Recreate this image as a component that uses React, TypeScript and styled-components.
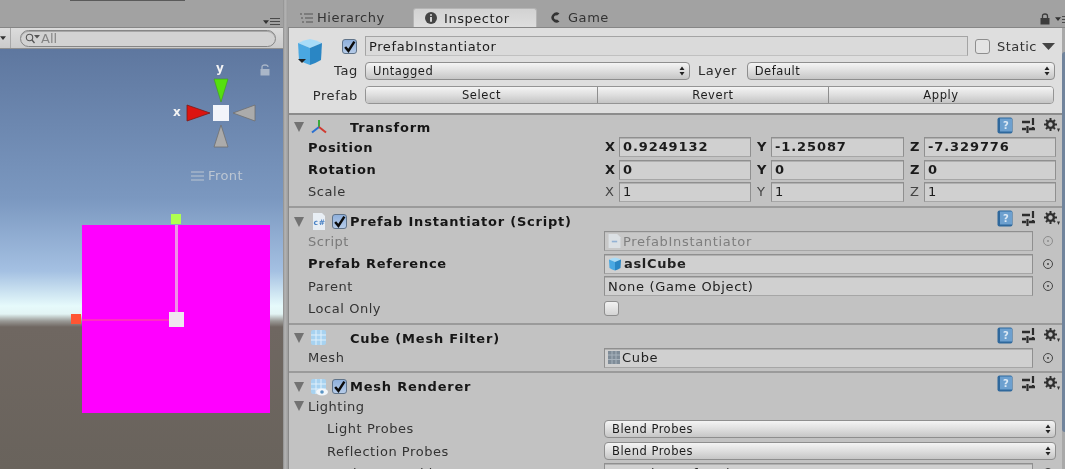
import styled, { createGlobalStyle } from "styled-components";

const Global = createGlobalStyle`
  html, body { margin: 0; padding: 0; background: #a2a2a2; }
  body { font-family: "DejaVu Sans", sans-serif; color: #1c1c1c; }
`;

const Window = styled.div`
  width: 1065px;
  height: 469px;
  display: flex;
  overflow: hidden;
  background: #a2a2a2;
  filter: blur(0.45px);
`;

/* ---------- left: scene ---------- */
const ScenePane = styled.div`
  width: 283px;
  display: flex;
  flex-direction: column;
  flex-shrink: 0;
`;

const SceneTop = styled.div`
  height: 27px;
  position: relative;
  background: #a2a2a2;
  border-bottom: 1px solid #868686;
`;

const TabEdge = styled.div`
  position: absolute;
  left: 70px;
  top: 0;
  width: 115px;
  height: 1px;
  background: #5a5a5a;
`;

const PaneMenu = styled.div<{ $right: number }>`
  position: absolute;
  right: ${(p) => p.$right}px;
  bottom: 2px;
  display: flex;
  align-items: center;
  gap: 1px;
`;

const SceneBar = styled.div`
  height: 20px;
  display: flex;
  align-items: center;
  background: linear-gradient(#dcdcdc, #cbcbcb);
  border-bottom: 1px solid #8f8f8f;
`;

const BarDrop = styled.div`
  width: 10px;
  height: 100%;
  display: flex;
  align-items: center;
  border-right: 1px solid #a8a8a8;
`;

const SearchBox = styled.div`
  margin-left: 9px;
  width: 256px;
  height: 17px;
  border: 1px solid #858585;
  border-radius: 9px;
  background: #d2d2d2;
  box-shadow: inset 0 1px 0 #a6a6a6;
  display: flex;
  align-items: center;
  gap: 1px;
  padding-left: 4px;
  box-sizing: border-box;
  font-size: 13px;
  color: #858585;
`;

const SceneView = styled.div`
  flex: 1;
  position: relative;
  overflow: hidden;
  background: linear-gradient(
    #5e779f 0,
    #7b98c0 150px,
    #a4c0e2 222px,
    #e6fafb 257px,
    #e2f4f4 265px,
    #9a9a96 272px,
    #6f6761 278px,
    #69635c 420px
  );
`;

const Gizmo = styled.svg`
  position: absolute;
  left: 165px;
  top: 10px;
`;

const GizmoLabel = styled.span<{ $x: number; $y: number }>`
  position: absolute;
  left: ${(p) => p.$x}px;
  top: ${(p) => p.$y}px;
  font-size: 12px;
  font-weight: 700;
  color: #f4f4f4;
`;

const SceneLock = styled.svg`
  position: absolute;
  left: 260px;
  top: 15px;
`;

const FrontLabel = styled.div`
  position: absolute;
  left: 191px;
  top: 119px;
  display: flex;
  align-items: center;
  gap: 4px;
  font-size: 13px;
  letter-spacing: 0.4px;
  color: #bcc6d2;
`;

const PinkQuad = styled.div`
  position: absolute;
  left: 82px;
  top: 176px;
  width: 188px;
  height: 188px;
  background: #ff00ff;
`;

const Handle = styled.div<{ $x: number; $y: number; $s: number; $c: string }>`
  position: absolute;
  left: ${(p) => p.$x}px;
  top: ${(p) => p.$y}px;
  width: ${(p) => p.$s}px;
  height: ${(p) => p.$s}px;
  background: ${(p) => p.$c};
`;

const AxisV = styled.div`
  position: absolute;
  left: 175px;
  top: 176px;
  width: 3px;
  height: 88px;
  background: #f08ee8;
`;

const AxisH = styled.div`
  position: absolute;
  left: 82px;
  top: 270px;
  width: 88px;
  height: 2px;
  background: #ff2cc4;
`;

const Splitter = styled.div`
  width: 5px;
  flex-shrink: 0;
  background: linear-gradient(90deg, #8e8e8e, #b4b4b4 40%, #9c9c9c);
`;

/* ---------- right: inspector ---------- */
const InspectorPane = styled.div`
  flex: 1;
  display: flex;
  flex-direction: column;
  min-width: 0;
`;

const TabStrip = styled.div`
  height: 28px;
  position: relative;
  display: flex;
  align-items: flex-end;
  padding-left: 9px;
  box-sizing: border-box;
  background: #a2a2a2;
  border-bottom: 1px solid #868686;
`;

const Tab = styled.div<{ $active?: boolean; $w: number; $pad: number; $gap: number }>`
  width: ${(p) => p.$w}px;
  height: 19px;
  box-sizing: border-box;
  display: flex;
  align-items: center;
  padding-left: ${(p) => p.$pad}px;
  gap: ${(p) => p.$gap}px;
  font-size: 13px;
  letter-spacing: 0.55px;
  color: ${(p) => (p.$active ? "#1e1e1e" : "#333")};
  background: ${(p) => (p.$active ? "linear-gradient(#d2d2d2, #dedede)" : "transparent")};
  border-radius: 3px 3px 0 0;
  border: ${(p) => (p.$active ? "1px solid #b4b4b4" : "none")};
  border-bottom: none;
`;

const Panel = styled.div`
  flex: 1;
  position: relative;
  border-left: 1px solid #8a8a8a;
  background: #c2c2c2;
  overflow: hidden;
`;

const ScrollTrack = styled.div`
  position: absolute;
  right: 0;
  top: 0;
  bottom: 0;
  width: 3px;
  background: #a9a9a9;
`;

const ScrollThumb = styled.div`
  margin-top: 24px;
  height: 380px;
  border-radius: 3px 0 0 3px;
  background: #71849c;
`;

const ObjectHeader = styled.div`
  height: 87px;
  box-sizing: border-box;
  background: #dedede;
  border-bottom: 2px solid #8c8c8c;
  padding: 8px 10px 0 7px;
  display: grid;
  grid-template-columns: 69px 1fr;
  grid-template-rows: 20px 20px 20px;
  row-gap: 4.5px;
`;

const CubeSlot = styled.div`
  display: flex;
  align-items: flex-start;
  position: relative;
  padding-top: 2px;
`;

const TopLine = styled.div`
  display: flex;
  align-items: center;
`;

const NameField = styled.div`
  width: 603px;
  height: 20px;
  box-sizing: border-box;
  border: 1px solid #a4a4a4;
  border-bottom-color: #c0c0c0;
  background: #dadada;
  padding-left: 3px;
  font-size: 13px;
  letter-spacing: 0.6px;
  line-height: 20px;
`;

const StaticLabel = styled.span`
  font-size: 13px;
  letter-spacing: 0.45px;
  margin-left: 7px;
  color: #333;
`;

const ArrowSlot = styled.span`
  margin-left: 5px;
  display: flex;
`;

const HeadLabel = styled.div`
  display: flex;
  justify-content: flex-end;
  align-items: center;
  font-size: 13px;
  letter-spacing: 0.65px;
  color: #2a2a2a;
  padding-right: 7px;
  margin-left: -40px;
`;

const Line = styled.div`
  display: flex;
  align-items: center;
`;

const Dropdown = styled.div<{ $w: number }>`
  width: ${(p) => p.$w}px;
  height: 18px;
  box-sizing: border-box;
  border: 1px solid #8e8e8e;
  border-radius: 4px;
  background: linear-gradient(#f4f4f4, #dedede 50%, #c6c6c6);
  display: flex;
  align-items: center;
  justify-content: space-between;
  padding: 0 4px 0 7px;
  font-size: 11.5px;
  letter-spacing: 0.5px;
  flex-shrink: 0;
`;

const LayerLabel = styled.span`
  font-size: 13px;
  letter-spacing: 0.5px;
  margin: 0 10px 0 8px;
  color: #2a2a2a;
`;

const ButtonGroup = styled.div`
  display: grid;
  grid-template-columns: 231px 231px 1fr;
  width: 689px;
  height: 18px;
  border: 1px solid #949494;
  border-radius: 4px;
  box-sizing: border-box;
  overflow: hidden;
`;

const GroupButton = styled.div`
  background: linear-gradient(#f4f4f4, #dedede 50%, #c4c4c4);
  border-left: 1px solid #8e8e8e;
  font-size: 11.5px;
  letter-spacing: 0.6px;
  text-align: center;
  line-height: 16px;
  &:first-child {
    border-left: none;
  }
`;

const Section = styled.section<{ $pad?: number }>`
  border-bottom: 2px solid #9a9a9a;
  padding-bottom: ${(p) => p.$pad ?? 3}px;
`;

const SectionHead = styled.div<{ $tall?: boolean }>`
  height: ${(p) => (p.$tall ? 22 : 21)}px;
  padding-top: ${(p) => (p.$tall ? 5 : 3)}px;
  box-sizing: border-box;
  position: relative;
  display: flex;
  align-items: center;
  padding-left: 5px;
  font-size: 13px;
  font-weight: 700;
  letter-spacing: 0.78px;
  color: #161616;
`;

const Fold = styled.i`
  width: 0;
  height: 0;
  border-left: 5px solid transparent;
  border-right: 5px solid transparent;
  border-top: 10px solid #727272;
  flex-shrink: 0;
`;

const IconCell = styled.div`
  width: 26px;
  margin-left: 2px;
  height: 18px;
  display: flex;
  align-items: center;
  justify-content: center;
  flex-shrink: 0;
`;

const CheckCell = styled.div`
  width: 18px;
  flex-shrink: 0;
  display: flex;
`;

const TitleGap = styled.div`
  width: 18px;
  flex-shrink: 0;
`;

const HeadTools = styled.div`
  position: absolute;
  right: 5px;
  top: 2px;
  display: flex;
  align-items: center;
  gap: 9px;
`;

const Row = styled.div`
  height: 22.4px;
  display: flex;
  align-items: center;
  padding-left: 19px;
`;

const RowLabel = styled.div<{ $bold?: boolean; $faint?: boolean; $indent?: number }>`
  width: 296px;
  flex-shrink: 0;
  box-sizing: border-box;
  padding-left: ${(p) => p.$indent ?? 0}px;
  font-size: 13px;
  letter-spacing: ${(p) => (p.$bold ? 0.72 : 0.55)}px;
  font-weight: ${(p) => (p.$bold ? 700 : 400)};
  color: ${(p) => (p.$faint ? "#797979" : p.$bold ? "#161616" : "#333")};
`;

const LightingRow = styled.div`
  height: 22.4px;
  display: flex;
  align-items: center;
  gap: 4px;
  padding-left: 5px;
  font-size: 13px;
  letter-spacing: 0.5px;
  color: #333;
`;

const Vector = styled.div`
  display: grid;
  grid-template-columns: 132px 133px 132px;
  column-gap: 20px;
  margin-left: 15px;
`;

const AxisCell = styled.div<{ $bold?: boolean }>`
  position: relative;
  height: 20px;
  box-sizing: border-box;
  border: 1px solid #8f8f8f;
  border-bottom-color: #a6a6a6;
  box-shadow: inset 0 1px 0 #b0b0b0;
  background: #d0d0d0;
  padding-left: 3px;
  font-size: 13px;
  line-height: 18px;
  letter-spacing: ${(p) => (p.$bold ? 0.9 : 0.5)}px;
  font-weight: ${(p) => (p.$bold ? 700 : 400)};
  &::before {
    content: attr(data-axis);
    position: absolute;
    left: -15px;
    top: 0;
    font-size: 13px;
    color: ${(p) => (p.$bold ? "#1a1a1a" : "#444")};
  }
`;

const ObjectField = styled.div<{ $faint?: boolean; $bold?: boolean }>`
  width: 429px;
  height: 20px;
  box-sizing: border-box;
  border: 1px solid #8f8f8f;
  border-bottom-color: #a6a6a6;
  box-shadow: inset 0 1px 0 ${(p) => (p.$faint ? "#bcbcbc" : "#b0b0b0")};
  background: ${(p) => (p.$faint ? "#c8c8c8" : "#d0d0d0")};
  padding-left: 3px;
  display: flex;
  align-items: center;
  gap: 2px;
  font-size: 13px;
  letter-spacing: ${(p) => (p.$bold ? 0.66 : 0.68)}px;
  font-weight: ${(p) => (p.$bold ? 700 : 400)};
  color: ${(p) => (p.$faint ? "#7e7e7e" : "#222")};
  flex-shrink: 0;
`;

const Picker = styled.i<{ $faint?: boolean }>`
  width: 8px;
  height: 8px;
  border: 1px solid ${(p) => (p.$faint ? "#8c8c8c" : "#444")};
  border-radius: 50%;
  margin-left: 10px;
  position: relative;
  flex-shrink: 0;
  &::after {
    content: "";
    position: absolute;
    left: 3px;
    top: 3px;
    width: 2px;
    height: 2px;
    border-radius: 50%;
    background: ${(p) => (p.$faint ? "#8c8c8c" : "#444")};
  }
`;

const CheckBox = styled.div<{ $checked?: boolean; $light?: boolean; $ml?: number; $mt?: number }>`
  width: 15px;
  height: 15px;
  margin-left: ${(p) => p.$ml ?? 0}px;
  margin-top: ${(p) => p.$mt ?? 0}px;
  box-sizing: border-box;
  border: 1px solid ${(p) => (p.$checked ? "#5f7389" : "#8e8e8e")};
  border-radius: 3px;
  background: ${(p) =>
    p.$checked
      ? "linear-gradient(#8fb0dc, #b5cbe8)"
      : p.$light
        ? "#e4e4e4"
        : "linear-gradient(#f2f2f2, #d4d4d4)"};
  display: flex;
  align-items: center;
  justify-content: center;
  flex-shrink: 0;
`;

const LockGap = styled.span`
  width: 3px;
`;

const Tick = () => (
  <svg width="13" height="13" viewBox="0 0 12 12">
    <path d="M2 6.5 L5 10 L10.5 1.5" fill="none" stroke="#0c0c0c" strokeWidth="2.3" />
  </svg>
);

const UpDown = () => (
  <svg width="6" height="10" viewBox="0 0 6 10">
    <path d="M3 0.5 L5.5 4 H0.5 Z M3 9.5 L5.5 6 H0.5 Z" fill="#222" />
  </svg>
);

const SmallCaret = ({ c = "#333" }: { c?: string }) => (
  <svg width="6" height="4" viewBox="0 0 8 5">
    <path d="M0 0 H8 L4 5 Z" fill={c} />
  </svg>
);

const MenuLines = () => (
  <svg width="10" height="7" viewBox="0 0 10 7">
    <path d="M0 0.5 H10 M0 3.5 H10 M0 6.5 H10" stroke="#4a4a4a" strokeWidth="1.1" />
  </svg>
);

const LockIcon = ({ c }: { c: string }) => (
  <svg width="10" height="12" viewBox="0 0 10 12">
    <rect x="0.5" y="5" width="9" height="6.5" fill={c} />
    <path d="M2.5 5 V3 Q2.5 1 5 1 Q7.5 1 7.5 3 V5" fill="none" stroke={c} strokeWidth="1.3" />
  </svg>
);

const CubeIcon = ({ s = 28, caret }: { s?: number; caret?: boolean }) => (
  <svg width={s} height={s} viewBox="0 0 28 28">
    <path d="M14 1 Q20 2 26 5 L14 10 L2 5 Q8 2 14 1 Z" fill="#a8dcf8" />
    <path d="M2 5 L14 10 L14 27 Q8 25 3 22 Z" fill="#4aa8e2" />
    <path d="M26 5 L14 10 L14 27 Q20 25 25 22 Z" fill="#2a86c4" />
    {caret && <path d="M2 21 H10 L6 25 Z" fill="#222" />}
  </svg>
);

const TransformIcon = () => (
  <svg width="18" height="16" viewBox="0 0 18 16">
    <path d="M9 8 V1" stroke="#3aa83a" strokeWidth="2" />
    <path d="M9 8 L2 13.5" stroke="#2a6fd0" strokeWidth="2" />
    <path d="M9 8 L16 13.5" stroke="#d03a30" strokeWidth="2" />
  </svg>
);

const HelpIcon = () => (
  <svg width="16" height="17" viewBox="0 0 16 17">
    <rect x="0.5" y="0.5" width="15" height="16" rx="2" fill="#2f689c" />
    <rect x="3" y="1.5" width="12" height="13" fill="#6da0cf" />
    <text x="6" y="12" fontSize="10" fill="#dce9f5" fontFamily="DejaVu Sans">?</text>
  </svg>
);

const SlidersIcon = () => (
  <svg width="13" height="15" viewBox="0 0 13 15">
    <path d="M0 4 H8 M0 11 H4 M7 11 H13" stroke="#2c2c2c" strokeWidth="2.4" fill="none" />
    <path d="M11 0 V7 M11 9 V11 M5.5 8 V15" stroke="#2c2c2c" strokeWidth="2.2" fill="none" />
  </svg>
);

const GearIcon = () => (
  <svg width="16" height="15" viewBox="0 0 16 15">
    <circle cx="6.5" cy="6.5" r="3.4" fill="none" stroke="#2e2e2e" strokeWidth="2.4" />
    <path d="M6.5 0 V2.5 M6.5 10.5 V13 M0 6.5 H2.5 M10.5 6.5 H13 M2 2 L3.6 3.6 M9.4 9.4 L11 11 M11 2 L9.4 3.6 M3.6 9.4 L2 11" stroke="#2e2e2e" strokeWidth="2" />
    <path d="M13 10.5 H16 L14.5 14 Z" fill="#333" />
  </svg>
);

const ScriptIcon = () => (
  <svg width="14" height="17" viewBox="0 0 14 17">
    <path d="M1 0 H10 L13 3 V17 H1 Z" fill="#e8eef4" />
    <text x="1.5" y="12" fontSize="7.5" fontWeight="700" fill="#4a82c4" fontFamily="DejaVu Sans">c#</text>
  </svg>
);

const MeshIcon = ({ eye }: { eye?: boolean }) => (
  <svg width="18" height="18" viewBox="0 0 18 18">
    <rect x="1" y="1" width="15" height="15" rx="2" fill="#a7d2f0" />
    <path d="M6 1 V16 M11 1 V16 M1 6 H16 M1 11 H16" stroke="#e0f0fb" strokeWidth="1" />
    {eye && (
      <>
        <ellipse cx="12" cy="14" rx="6" ry="3.4" fill="#f2f6fa" />
        <circle cx="12" cy="14" r="1.8" fill="#5a94c4" />
      </>
    )}
  </svg>
);

const TinyMesh = () => (
  <svg width="12" height="13" viewBox="0 0 12 13">
    <rect width="12" height="13" fill="#7f8c98" />
    <path d="M4 0 V13 M8 0 V13 M0 4 H12 M0 8.5 H12" stroke="#a7b2bc" strokeWidth="1" />
  </svg>
);

const FaintScript = () => (
  <svg width="13" height="14" viewBox="0 0 11 13">
    <path d="M0 0 H8 L11 3 V13 H0 Z" fill="#dbe0e4" />
    <path d="M3 7 H8" stroke="#93b2d4" strokeWidth="1.5" />
  </svg>
);

const SearchIcon = () => (
  <svg width="15" height="11" viewBox="0 0 15 11">
    <circle cx="4.5" cy="4.5" r="3.2" fill="none" stroke="#555" strokeWidth="1.1" />
    <path d="M7 7 L9.5 10" stroke="#555" strokeWidth="1.3" />
    <path d="M9 2 H15 L12 5.5 Z" fill="#555" />
  </svg>
);

const HeadButtons = () => (
  <HeadTools>
    <HelpIcon />
    <SlidersIcon />
    <GearIcon />
  </HeadTools>
);

const vectors = [
  { label: "Position", bold: true, v: ["0.9249132", "-1.25087", "-7.329776"] },
  { label: "Rotation", bold: true, v: ["0", "0", "0"] },
  { label: "Scale", bold: false, v: ["1", "1", "1"] },
];

export default function App() {
  return (
    <>
      <Global />
      <Window>
        <ScenePane>
          <SceneTop>
            <TabEdge />
            <PaneMenu $right={3}>
              <SmallCaret />
              <MenuLines />
            </PaneMenu>
          </SceneTop>
          <SceneBar>
            <BarDrop>
              <SmallCaret />
            </BarDrop>
            <SearchBox>
              <SearchIcon />
              All
            </SearchBox>
          </SceneBar>
          <SceneView>
            <Gizmo width="100" height="92" viewBox="0 0 100 92">
              <path d="M49 20 H63 L56 43 Z" fill="#55e00f" stroke="#3f9a1a" strokeWidth="0.6" />
              <path d="M22 46 L45 54 L22 62 Z" fill="#dd1410" stroke="#7c1a16" strokeWidth="0.8" />
              <path d="M90 46 L68 54 L90 62 Z" fill="#ababab" stroke="#707070" strokeWidth="0.8" />
              <path d="M49 88 L56 66 L63 88 Z" fill="#ababab" stroke="#707070" strokeWidth="0.8" />
              <rect x="48" y="46" width="16" height="16" fill="#f2f4fa" />
            </Gizmo>
            <GizmoLabel $x={216} $y={12}>y</GizmoLabel>
            <GizmoLabel $x={173} $y={56}>x</GizmoLabel>
            <SceneLock width="10" height="12" viewBox="0 0 10 12">
              <rect x="0.5" y="5" width="9" height="6.5" fill="#a9b6c8" />
              <path d="M2 5 V3 Q2 1 5 1 Q8 1 8 3" fill="none" stroke="#a9b6c8" strokeWidth="1.3" />
            </SceneLock>
            <FrontLabel>
              <svg width="13" height="10" viewBox="0 0 13 10">
                <path d="M0 1 H13 M0 5 H13 M0 9 H13" stroke="#bcc6d2" strokeWidth="1.2" />
              </svg>
              Front
            </FrontLabel>
            <PinkQuad />
            <AxisV />
            <AxisH />
            <Handle $x={171} $y={165} $s={10} $c="#afff50" />
            <Handle $x={71} $y={265} $s={10} $c="#ff5533" />
            <Handle $x={169} $y={263} $s={15} $c="#efe6ef" />
          </SceneView>
        </ScenePane>
        <Splitter />
        <InspectorPane>
          <TabStrip>
            <Tab $w={116} $pad={3} $gap={4}>
              <svg width="13" height="10" viewBox="0 0 13 10">
                <path d="M0 1 H2 M4 1 H13 M1 5 H3 M5 5 H13 M2 9 H4 M6 9 H13" stroke="#555" strokeWidth="1.1" />
              </svg>
              Hierarchy
            </Tab>
            <Tab $w={124} $pad={11} $gap={7} $active>
              <svg width="12" height="12" viewBox="0 0 12 12">
                <circle cx="6" cy="6" r="6" fill="#444" />
                <path d="M6 2.2 V3.8 M6 5 V9.8" stroke="#e4e4e4" strokeWidth="1.8" />
              </svg>
              Inspector
            </Tab>
            <Tab $w={88} $pad={13} $gap={7}>
              <svg width="11" height="11" viewBox="0 0 11 11">
                <path d="M9.5 1.5 A5 5 0 1 0 9.5 9.5 L7 7.5 A2.2 2.2 0 1 1 7 3.5 Z" fill="#333" />
              </svg>
              Game
            </Tab>
            <PaneMenu $right={-7}>
              <LockIcon c="#3c3c3c" />
              <LockGap />
              <SmallCaret />
              <MenuLines />
            </PaneMenu>
          </TabStrip>
          <Panel>
            <ScrollTrack>
              <ScrollThumb />
            </ScrollTrack>
            <ObjectHeader>
              <CubeSlot>
                <CubeIcon caret />
                <CheckBox $checked $ml={18} $mt={1}>
                  <Tick />
                </CheckBox>
              </CubeSlot>
              <TopLine>
                <NameField>PrefabInstantiator</NameField>
                <CheckBox $light $ml={7} />
                <StaticLabel>Static</StaticLabel>
                <ArrowSlot>
                  <svg width="13" height="7" viewBox="0 0 13 7">
                    <path d="M0 0 H13 L6.5 7 Z" fill="#444" />
                  </svg>
                </ArrowSlot>
              </TopLine>
              <HeadLabel>Tag</HeadLabel>
              <Line>
                <Dropdown $w={325}>
                  Untagged
                  <UpDown />
                </Dropdown>
                <LayerLabel>Layer</LayerLabel>
                <Dropdown $w={308}>
                  Default
                  <UpDown />
                </Dropdown>
              </Line>
              <HeadLabel>Prefab</HeadLabel>
              <Line>
                <ButtonGroup>
                  <GroupButton>Select</GroupButton>
                  <GroupButton>Revert</GroupButton>
                  <GroupButton>Apply</GroupButton>
                </ButtonGroup>
              </Line>
            </ObjectHeader>

            <Section>
              <SectionHead>
                <Fold />
                <IconCell>
                  <TransformIcon />
                </IconCell>
                <TitleGap />
                Transform
                <HeadButtons />
              </SectionHead>
              {vectors.map((r) => (
                <Row key={r.label}>
                  <RowLabel $bold={r.bold}>{r.label}</RowLabel>
                  <Vector>
                    {r.v.map((val, i) => (
                      <AxisCell key={i} $bold={r.bold} data-axis={"XYZ"[i]}>
                        {val}
                      </AxisCell>
                    ))}
                  </Vector>
                </Row>
              ))}
            </Section>

            <Section>
              <SectionHead $tall>
                <Fold />
                <IconCell>
                  <ScriptIcon />
                </IconCell>
                <CheckCell>
                  <CheckBox $checked>
                    <Tick />
                  </CheckBox>
                </CheckCell>
                Prefab Instantiator (Script)
                <HeadButtons />
              </SectionHead>
              <Row>
                <RowLabel $faint>Script</RowLabel>
                <ObjectField $faint>
                  <FaintScript />
                  PrefabInstantiator
                </ObjectField>
                <Picker $faint />
              </Row>
              <Row>
                <RowLabel $bold>Prefab Reference</RowLabel>
                <ObjectField $bold>
                  <CubeIcon s={14} />
                  aslCube
                </ObjectField>
                <Picker />
              </Row>
              <Row>
                <RowLabel>Parent</RowLabel>
                <ObjectField>None (Game Object)</ObjectField>
                <Picker />
              </Row>
              <Row>
                <RowLabel>Local Only</RowLabel>
                <CheckBox />
              </Row>
            </Section>

            <Section $pad={2}>
              <SectionHead $tall>
                <Fold />
                <IconCell>
                  <MeshIcon />
                </IconCell>
                <TitleGap />
                Cube (Mesh Filter)
                <HeadButtons />
              </SectionHead>
              <Row>
                <RowLabel>Mesh</RowLabel>
                <ObjectField>
                  <TinyMesh />
                  Cube
                </ObjectField>
                <Picker />
              </Row>
            </Section>

            <Section>
              <SectionHead $tall>
                <Fold />
                <IconCell>
                  <MeshIcon eye />
                </IconCell>
                <CheckCell>
                  <CheckBox $checked>
                    <Tick />
                  </CheckBox>
                </CheckCell>
                Mesh Renderer
                <HeadButtons />
              </SectionHead>
              <LightingRow>
                <Fold />
                Lighting
              </LightingRow>
              <Row>
                <RowLabel $indent={19}>Light Probes</RowLabel>
                <Dropdown $w={452}>
                  Blend Probes
                  <UpDown />
                </Dropdown>
              </Row>
              <Row>
                <RowLabel $indent={19}>Reflection Probes</RowLabel>
                <Dropdown $w={452}>
                  Blend Probes
                  <UpDown />
                </Dropdown>
              </Row>
              <Row>
                <RowLabel $indent={19}>Anchor Override</RowLabel>
                <ObjectField>None (Transform)</ObjectField>
                <Picker />
              </Row>
            </Section>
          </Panel>
        </InspectorPane>
      </Window>
    </>
  );
}
